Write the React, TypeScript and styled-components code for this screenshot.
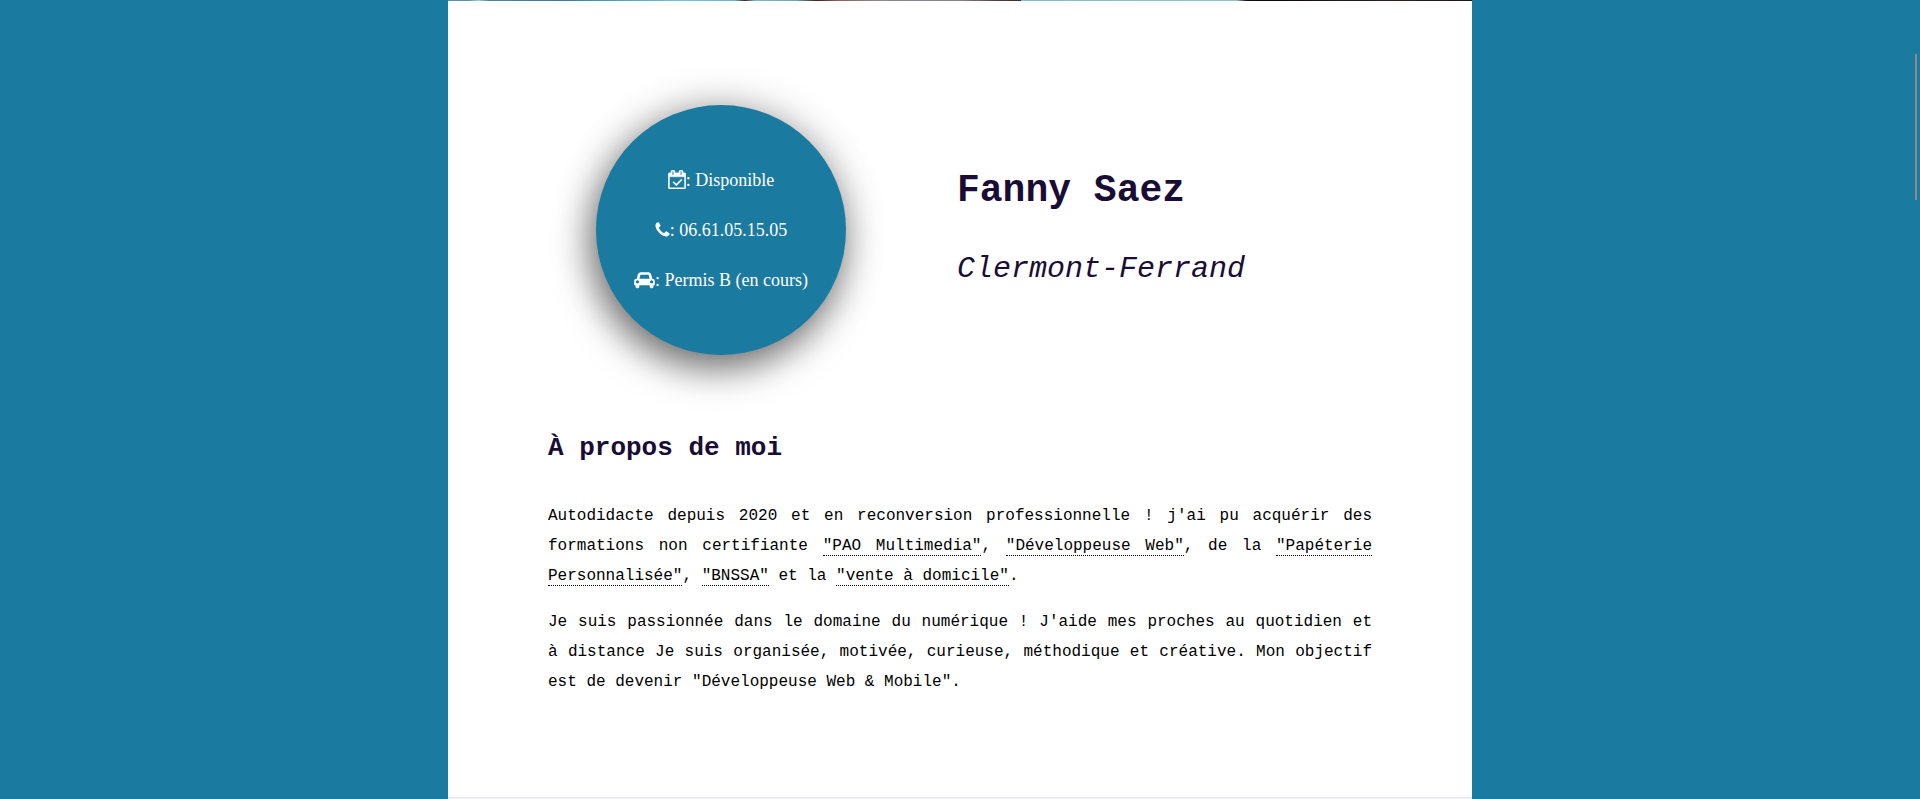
import React from "react";
import styled, { createGlobalStyle } from "styled-components";

const GlobalStyle = createGlobalStyle`
  *, *::before, *::after { box-sizing: border-box; }
  body { margin: 0; background: #1b7aa0; }
  h1, h2, p, ul { margin: 0; padding: 0; }
`;

const mono = `"Courier New", "Liberation Mono", monospace`;
const serif = `"Times New Roman", "Liberation Serif", serif`;

const Page = styled.div`
  display: flex;
  min-height: 100vh;
  padding: 0 16px;
  justify-content: center;
`;

const Sheet = styled.main`
  display: flex;
  flex-direction: column;
  width: 100%;
  max-width: 1024px;
  background: #ffffff;
`;

const Banner = styled.div`
  height: 1px;
  background: linear-gradient(
    90deg,
    #5a93a5 0%, #5a93a5 2%, #a5cdd8 3%, #4f8496 4%, #3f7a90 11%, #4d96ac 15%,
    #7dc1d3 23%, #6fb0c2 28%, #3a2c28 29%, #7fb9c6 30%, #6fa5b2 34%,
    #3d2226 36%, #8a5f58 38%, #94868e 42%, #8d7f8a 50%, #4a3638 54%,
    #3c2b2c 56%, #8abccb 56%, #93c0cc 77%, #0e0b0f 78%, #0a080b 81%,
    #241a1e 88%, #2c1e1c 93%, #1d1418 100%
  );
`;

const Hero = styled.header`
  display: flex;
  flex-wrap: wrap;
  align-items: center;
  gap: 40px 111px;
  padding: 104px 100px 78px 148px;
`;

const Badge = styled.ul`
  display: flex;
  flex-direction: column;
  justify-content: center;
  width: 250px;
  height: 250px;
  border-radius: 50%;
  background: #1b7aa0;
  box-shadow: -5px 14px 36px rgba(0, 0, 0, 0.5), 0 0 44px rgba(0, 0, 0, 0.2);
  color: #ffffff;
  font: 18px/50px ${serif};
  list-style: none;
  text-align: center;
`;

const BadgeItem = styled.li`
  height: 50px;
  white-space: nowrap;
`;

const Glyph = styled.svg<{ $width: number; $height?: number }>`
  width: ${(p) => p.$width}px;
  height: ${(p) => p.$height ?? 18}px;
  fill: currentColor;
  vertical-align: -3px;
`;

const Identity = styled.div`
  display: flex;
  flex-direction: column;
  gap: 38px;
  color: #1a0d34;
  font-family: ${mono};
  line-height: 40px;
`;

const Name = styled.h1`
  font-size: 38px;
  font-weight: 700;
`;

const City = styled.p`
  font-size: 30px;
  font-style: italic;
`;

const About = styled.section`
  padding: 0 100px 100px;
  font-family: ${mono};
`;

const Title = styled.h2`
  margin-bottom: 38px;
  color: #1a0d34;
  font-size: 26px;
  line-height: 30px;
`;

const Paragraph = styled.p`
  color: #000000;
  font-size: 16px;
  line-height: 30px;
  text-align: justify;

  & + & { margin-top: 16px; }
`;

const Term = styled.abbr`
  border-bottom: 1px dotted #000000;
  text-decoration: none;
`;

const NextSection = styled.section`
  flex: 1;
  background: #edecf4;
`;

const ScrollMarker = styled.div`
  position: fixed;
  top: 54px;
  right: 3px;
  width: 2px;
  height: 146px;
  background: #8f8a8c;
`;

const CalendarIcon = () => (
  <Glyph $width={18} $height={19} viewBox="0 0 1664 1792" aria-hidden="true">
    <path
      stroke="currentColor"
      strokeWidth="36"
      d="M1303 964l-512 512q-10 9-23 9t-23-9l-288-288q-9-10-9-23t9-22l46-46q9-9 22-9t23 9l220 220 444-444q10-9 23-9t22 9l46 46q9 9 9 22t-9 23zm-1175 700h1408v-1024h-1408v1024zm384-1216v-288q0-14-9-23t-23-9h-64q-14 0-23 9t-9 23v288q0 14 9 23t23 9h64q14 0 23-9t9-23zm768 0v-288q0-14-9-23t-23-9h-64q-14 0-23 9t-9 23v288q0 14 9 23t23 9h64q14 0 23-9t9-23zm384-64v1280q0 52-38 90t-90 38h-1408q-52 0-90-38t-38-90v-1280q0-52 38-90t90-38h128v-96q0-66 47-113t113-47h64q66 0 113 47t47 113v96h384v-96q0-66 47-113t113-47h64q66 0 113 47t47 113v96h128q52 0 90 38t38 90z"
    />
  </Glyph>
);

const PhoneIcon = () => (
  <Glyph $width={15} viewBox="192 0 1408 1792" aria-hidden="true">
    <path d="M1600 1240q0 27-10 70.5t-21 68.5q-21 50-122 106-94 51-186 51-27 0-53-3.5t-57.5-12.5-47-14.5-55.5-20.5-49-18q-98-35-175-83-127-79-264-216t-216-264q-48-77-83-175-3-9-18-49t-20.5-55.5-14.5-47-12.5-57.5-3.5-53q0-92 51-186 56-101 106-122 25-11 68.5-21t70.5-10q14 0 21 3 18 6 53 76 11 19 30 54t35 63.5 31 53.5q3 4 17.5 25t21.5 35.5 7 28.5q0 20-28.5 50t-62 55-62 53-28.5 46q0 9 5 22.5t8.5 20.5 14 24 11.5 19q76 137 174 235t235 174q2 1 19 11.5t24 14 20.5 8.5 22.5 5q18 0 46-28.5t53-62 55-62 50-28.5q14 0 28.5 7t35.5 21.5 25 17.5q25 15 53.5 31t63.5 35 54 30q70 35 76 53 3 7 3 21z" />
  </Glyph>
);

const CarIcon = () => (
  <Glyph $width={21} viewBox="0 0 2048 1792" aria-hidden="true">
    <path d="M480 1088q0-66-47-113t-113-47-113 47-47 113 47 113 113 47 113-47 47-113zm36-320h1016l-89-357q-2-8-14-17.5t-21-9.5h-768q-9 0-21 9.5t-14 17.5zm1372 320q0-66-47-113t-113-47-113 47-47 113 47 113 113 47 113-47 47-113zm160-96v384q0 14-9 23t-23 9h-96v128q0 80-56 136t-136 56-136-56-56-136v-128h-1024v128q0 80-56 136t-136 56-136-56-56-136v-128h-96q-14 0-23-9t-9-23v-384q0-93 65.5-158.5t158.5-65.5h28l105-419q23-94 104-157.5t179-63.5h768q98 0 179 63.5t104 157.5l105 419h28q93 0 158.5 65.5t65.5 158.5z" />
  </Glyph>
);

export default function App() {
  return (
    <>
      <GlobalStyle />
      <Page>
        <Sheet>
          <Banner />
          <Hero>
            <Badge>
              <BadgeItem><CalendarIcon />: Disponible</BadgeItem>
              <BadgeItem><PhoneIcon />: 06.61.05.15.05</BadgeItem>
              <BadgeItem><CarIcon />: Permis B (en cours)</BadgeItem>
            </Badge>
            <Identity>
              <Name>Fanny Saez</Name>
              <City>Clermont-Ferrand</City>
            </Identity>
          </Hero>
          <About>
            <Title>À propos de moi</Title>
            <Paragraph>
              Autodidacte depuis 2020 et en reconversion professionnelle ! j'ai pu acquérir des
              formations non certifiante <Term>"PAO Multimedia"</Term>, <Term>"Développeuse Web"</Term>,
              de la <Term>"Papéterie Personnalisée"</Term>, <Term>"BNSSA"</Term> et
              la <Term>"vente à domicile"</Term>.
            </Paragraph>
            <Paragraph>
              Je suis passionnée dans le domaine du numérique ! J'aide mes proches au quotidien et
              à distance Je suis organisée, motivée, curieuse, méthodique et créative. Mon objectif
              est de devenir "Développeuse Web &amp; Mobile".
            </Paragraph>
          </About>
          <NextSection />
        </Sheet>
      </Page>
      <ScrollMarker />
    </>
  );
}
